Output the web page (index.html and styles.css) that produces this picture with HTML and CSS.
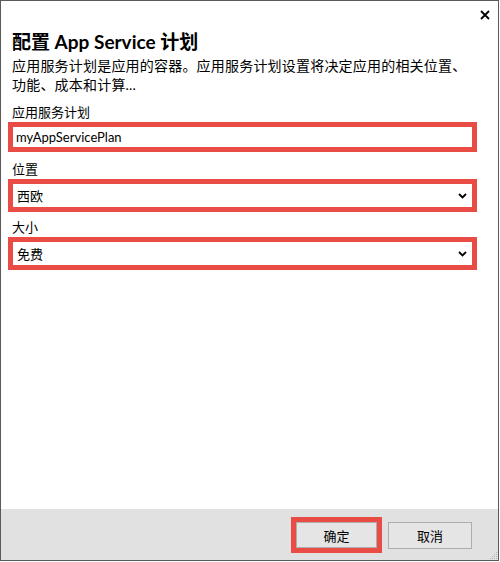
FILE: index.html
```html
<!DOCTYPE html>
<html lang="zh-CN">
<head>
<meta charset="utf-8">
<title>配置 App Service 计划</title>
<link rel="stylesheet" href="styles.css">
</head>
<body>
<div class="window">
  <button class="close" aria-label="关闭">
    <svg width="10" height="10" viewBox="0 0 10 10"><path d="M1 1 L9 9 M9 1 L1 9" stroke="#000" stroke-width="1.8" fill="none"/></svg>
  </button>
  <div class="content">
    <h1 class="title">配置 App Service 计划</h1>
    <p class="desc">应用服务计划是应用的容器。应用服务计划设置将决定应用的相关位置、<br>功能、成本和计算...</p>

    <div class="field f1">
      <div class="label">应用服务计划</div>
      <div class="hl"><div class="control">myAppServicePlan</div></div>
    </div>
    <div class="field f2">
      <div class="label">位置</div>
      <div class="hl"><div class="control select"><span>西欧</span>
        <svg class="chev" width="9" height="6" viewBox="0 0 9 6"><path d="M1 1 L4.5 4.5 L8 1" stroke="#000" stroke-width="1.8" fill="none"/></svg></div></div>
    </div>
    <div class="field f3">
      <div class="label">大小</div>
      <div class="hl"><div class="control select"><span>免费</span>
        <svg class="chev" width="9" height="6" viewBox="0 0 9 6"><path d="M1 1 L4.5 4.5 L8 1" stroke="#000" stroke-width="1.8" fill="none"/></svg></div></div>
    </div>
  </div>
  <div class="footer">
    <div class="hl-btn"><button class="btn">确定</button></div>
    <button class="btn cancel">取消</button>
    <svg class="grip" width="8" height="8" viewBox="0 0 8 8">
      <rect x="6" y="0" width="1" height="1" fill="#b5b5b5"/>
      <rect x="4" y="2" width="1" height="1" fill="#b5b5b5"/><rect x="6" y="2" width="1" height="1" fill="#b5b5b5"/>
      <rect x="2" y="4" width="1" height="1" fill="#b5b5b5"/><rect x="4" y="4" width="1" height="1" fill="#b5b5b5"/><rect x="6" y="4" width="1" height="1" fill="#b5b5b5"/>
      <rect x="0" y="6" width="1" height="1" fill="#b5b5b5"/><rect x="2" y="6" width="1" height="1" fill="#b5b5b5"/><rect x="4" y="6" width="1" height="1" fill="#b5b5b5"/><rect x="6" y="6" width="1" height="1" fill="#b5b5b5"/>
    </svg>
  </div>
</div>
</body>
</html>
```

FILE: styles.css
```css
html, body {
  margin: 0;
  padding: 0;
  background: #ffffff;
}
body {
  font-family: "Lato", "Noto Sans CJK SC", sans-serif;
  color: #000;
}
.window {
  position: relative;
  box-sizing: border-box;
  width: 499px;
  height: 561px;
  border: 1px solid #5a5a5a;
  display: flex;
  flex-direction: column;
  background: #fff;
}
.close {
  position: absolute;
  top: 8px;
  right: 7px;
  width: 12px;
  height: 12px;
  padding: 0;
  border: 0;
  background: transparent;
  display: flex;
  align-items: center;
  justify-content: center;
}
.content {
  flex: 1;
  padding: 27px 21px 0 7px;
}
.title {
  margin: 0 0 0 4px;
  font-size: 19px;
  font-weight: bold;
  line-height: 28px;
}
.desc {
  margin: 0 0 0 4px;
  font-size: 14px;
  line-height: 19px;
  letter-spacing: 0.2px;
}
.f1 { margin-top: 10px; }
.f2 { margin-top: 9px; }
.f3 { margin-top: 7px; }
.label {
  margin-left: 4px;
  font-size: 13px;
  line-height: 17px;
}
.hl {
  border: 5px solid #e84c45;
  margin-top: 1px;
}
.control {
  box-sizing: border-box;
  height: 20px;
  background: #fff;
  font-size: 13px;
  line-height: 20px;
  padding-left: 3px;
  display: flex;
  align-items: center;
  justify-content: space-between;
}
.select {
  height: 23px;
  padding-left: 4px;
  padding-right: 5px;
}
.footer {
  position: relative;
  height: 51px;
  background: #e1e1e1;
  display: flex;
  justify-content: flex-end;
  align-items: flex-start;
  padding: 8px 26px 0 0;
  box-sizing: border-box;
}
.hl-btn {
  border: 5px solid #e84c45;
  margin-right: 6px;
}
.btn {
  display: block;
  width: 81px;
  height: 26px;
  margin: 0;
  padding: 0;
  background: #e5e5e5;
  border: 1px solid #adadad;
  font-family: "Noto Sans CJK SC", sans-serif;
  font-size: 13px;
  color: #000;
}
.cancel {
  width: 84px;
  height: 27px;
  margin-top: 5px;
}
.grip {
  position: absolute;
  right: 0;
  bottom: 0;
}
```
